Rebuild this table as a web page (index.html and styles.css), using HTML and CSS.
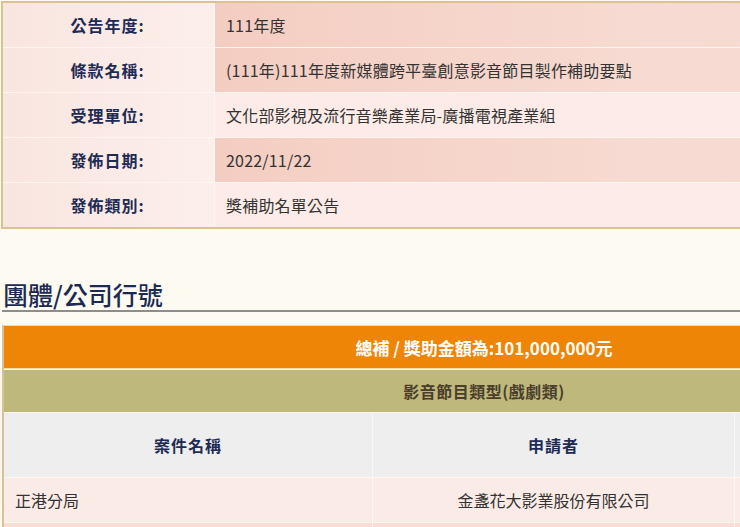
FILE: index.html
```html
<!DOCTYPE html>
<html lang="zh-Hant">
<head>
<meta charset="utf-8">
<title>公告內容</title>
<link rel="stylesheet" href="styles.css">
</head>
<body>
<div class="page">
  <div class="info">
    <div class="row">
      <div class="label">公告年度:</div>
      <div class="value dark">111年度</div>
    </div>
    <div class="row">
      <div class="label">條款名稱:</div>
      <div class="value dark">(111年)111年度新媒體跨平臺創意影音節目製作補助要點</div>
    </div>
    <div class="row">
      <div class="label">受理單位:</div>
      <div class="value">文化部影視及流行音樂產業局-廣播電視產業組</div>
    </div>
    <div class="row">
      <div class="label">發佈日期:</div>
      <div class="value dark">2022/11/22</div>
    </div>
    <div class="row">
      <div class="label">發佈類別:</div>
      <div class="value">獎補助名單公告</div>
    </div>
  </div>

  <h2 class="section-title">團體/公司行號</h2>

  <div class="list">
    <div class="total">總補 / 獎助金額為:101,000,000元</div>
    <div class="category">影音節目類型(戲劇類)</div>
    <div class="grid head">
      <div class="cell">案件名稱</div>
      <div class="cell">申請者</div>
      <div class="cell"></div>
    </div>
    <div class="grid data">
      <div class="cell left">正港分局</div>
      <div class="cell">金盞花大影業股份有限公司</div>
      <div class="cell"></div>
    </div>
    <div class="grid data alt">
      <div class="cell left">&nbsp;</div>
      <div class="cell">&nbsp;</div>
      <div class="cell"></div>
    </div>
  </div>
</div>
</body>
</html>
```

FILE: styles.css
```css
html, body {
  margin: 0;
  padding: 0;
  background: #fdfaf2;
  overflow: hidden;
}
body {
  font-family: "Noto Sans CJK TC", "Noto Sans", sans-serif;
  font-size: 16px;
  color: #333;
}
.page {
  width: 964px;
  padding: 1px 0 0 1px;
}
.info {
  width: 958px;
  border: 2px solid #dcc292;
  background: #fff4f0;
  display: flex;
  flex-direction: column;
  gap: 1px;
}
.row {
  display: grid;
  grid-template-columns: 211px 1fr;
  column-gap: 1px;
  height: 44px;
}
.label {
  display: flex;
  align-items: center;
  justify-content: center;
  font-weight: bold;
  letter-spacing: 1px;
  color: #1e2c55;
  background: linear-gradient(to right, #f9e5df, #fcefeb);
  padding-right: 2px;
}
.value {
  display: flex;
  align-items: center;
  padding-left: 11px;
  letter-spacing: 0.2px;
  background: #fcebe6;
  color: #333;
}
.value.dark {
  background: linear-gradient(to right, #f4cdc2, #f7dbd2 60%, #f6d6cc);
}
.section-title {
  margin: 50px 0 0 1px;
  font-size: 25px;
  line-height: 31px;
  font-weight: 500;
  color: #1b2a52;
  padding-left: 1px;
  border-bottom: 2px solid #8d8d8d;
  width: 960px;
}
.list {
  margin-top: 13px;
  width: 960px;
  margin-left: 1px;
  border-left: 2px solid #dcc292;
  border-top: 1px solid #f1d9aa;
  background: #fff6ef;
  display: flex;
  flex-direction: column;
  gap: 1px;
}
.total {
  height: 42px;
  background: #ee8507;
  color: #fff;
  font-weight: bold;
  font-size: 17px;
  display: flex;
  align-items: center;
  justify-content: center;
  border-bottom: 1px solid #f4d9a9;
}
.category {
  height: 42px;
  background: #bfb87b;
  color: #4a3e2b;
  font-weight: bold;
  letter-spacing: 0.5px;
  display: flex;
  align-items: center;
  justify-content: center;
}
.grid {
  display: grid;
  grid-template-columns: 368px 361px 1fr;
  column-gap: 1px;
}
.grid .cell {
  display: flex;
  align-items: center;
  justify-content: center;
}
.grid .cell.left {
  justify-content: flex-start;
  padding-left: 11px;
}
.head {
  height: 64px;
}
.head .cell {
  background: #eeeeee;
  font-weight: bold;
  letter-spacing: 1px;
  color: #1e2c55;
}
.data {
  height: 44px;
}
.data .cell {
  background: #fbebe6;
  color: #333;
}
.data.alt .cell {
  background: #f9dcd3;
}
```
